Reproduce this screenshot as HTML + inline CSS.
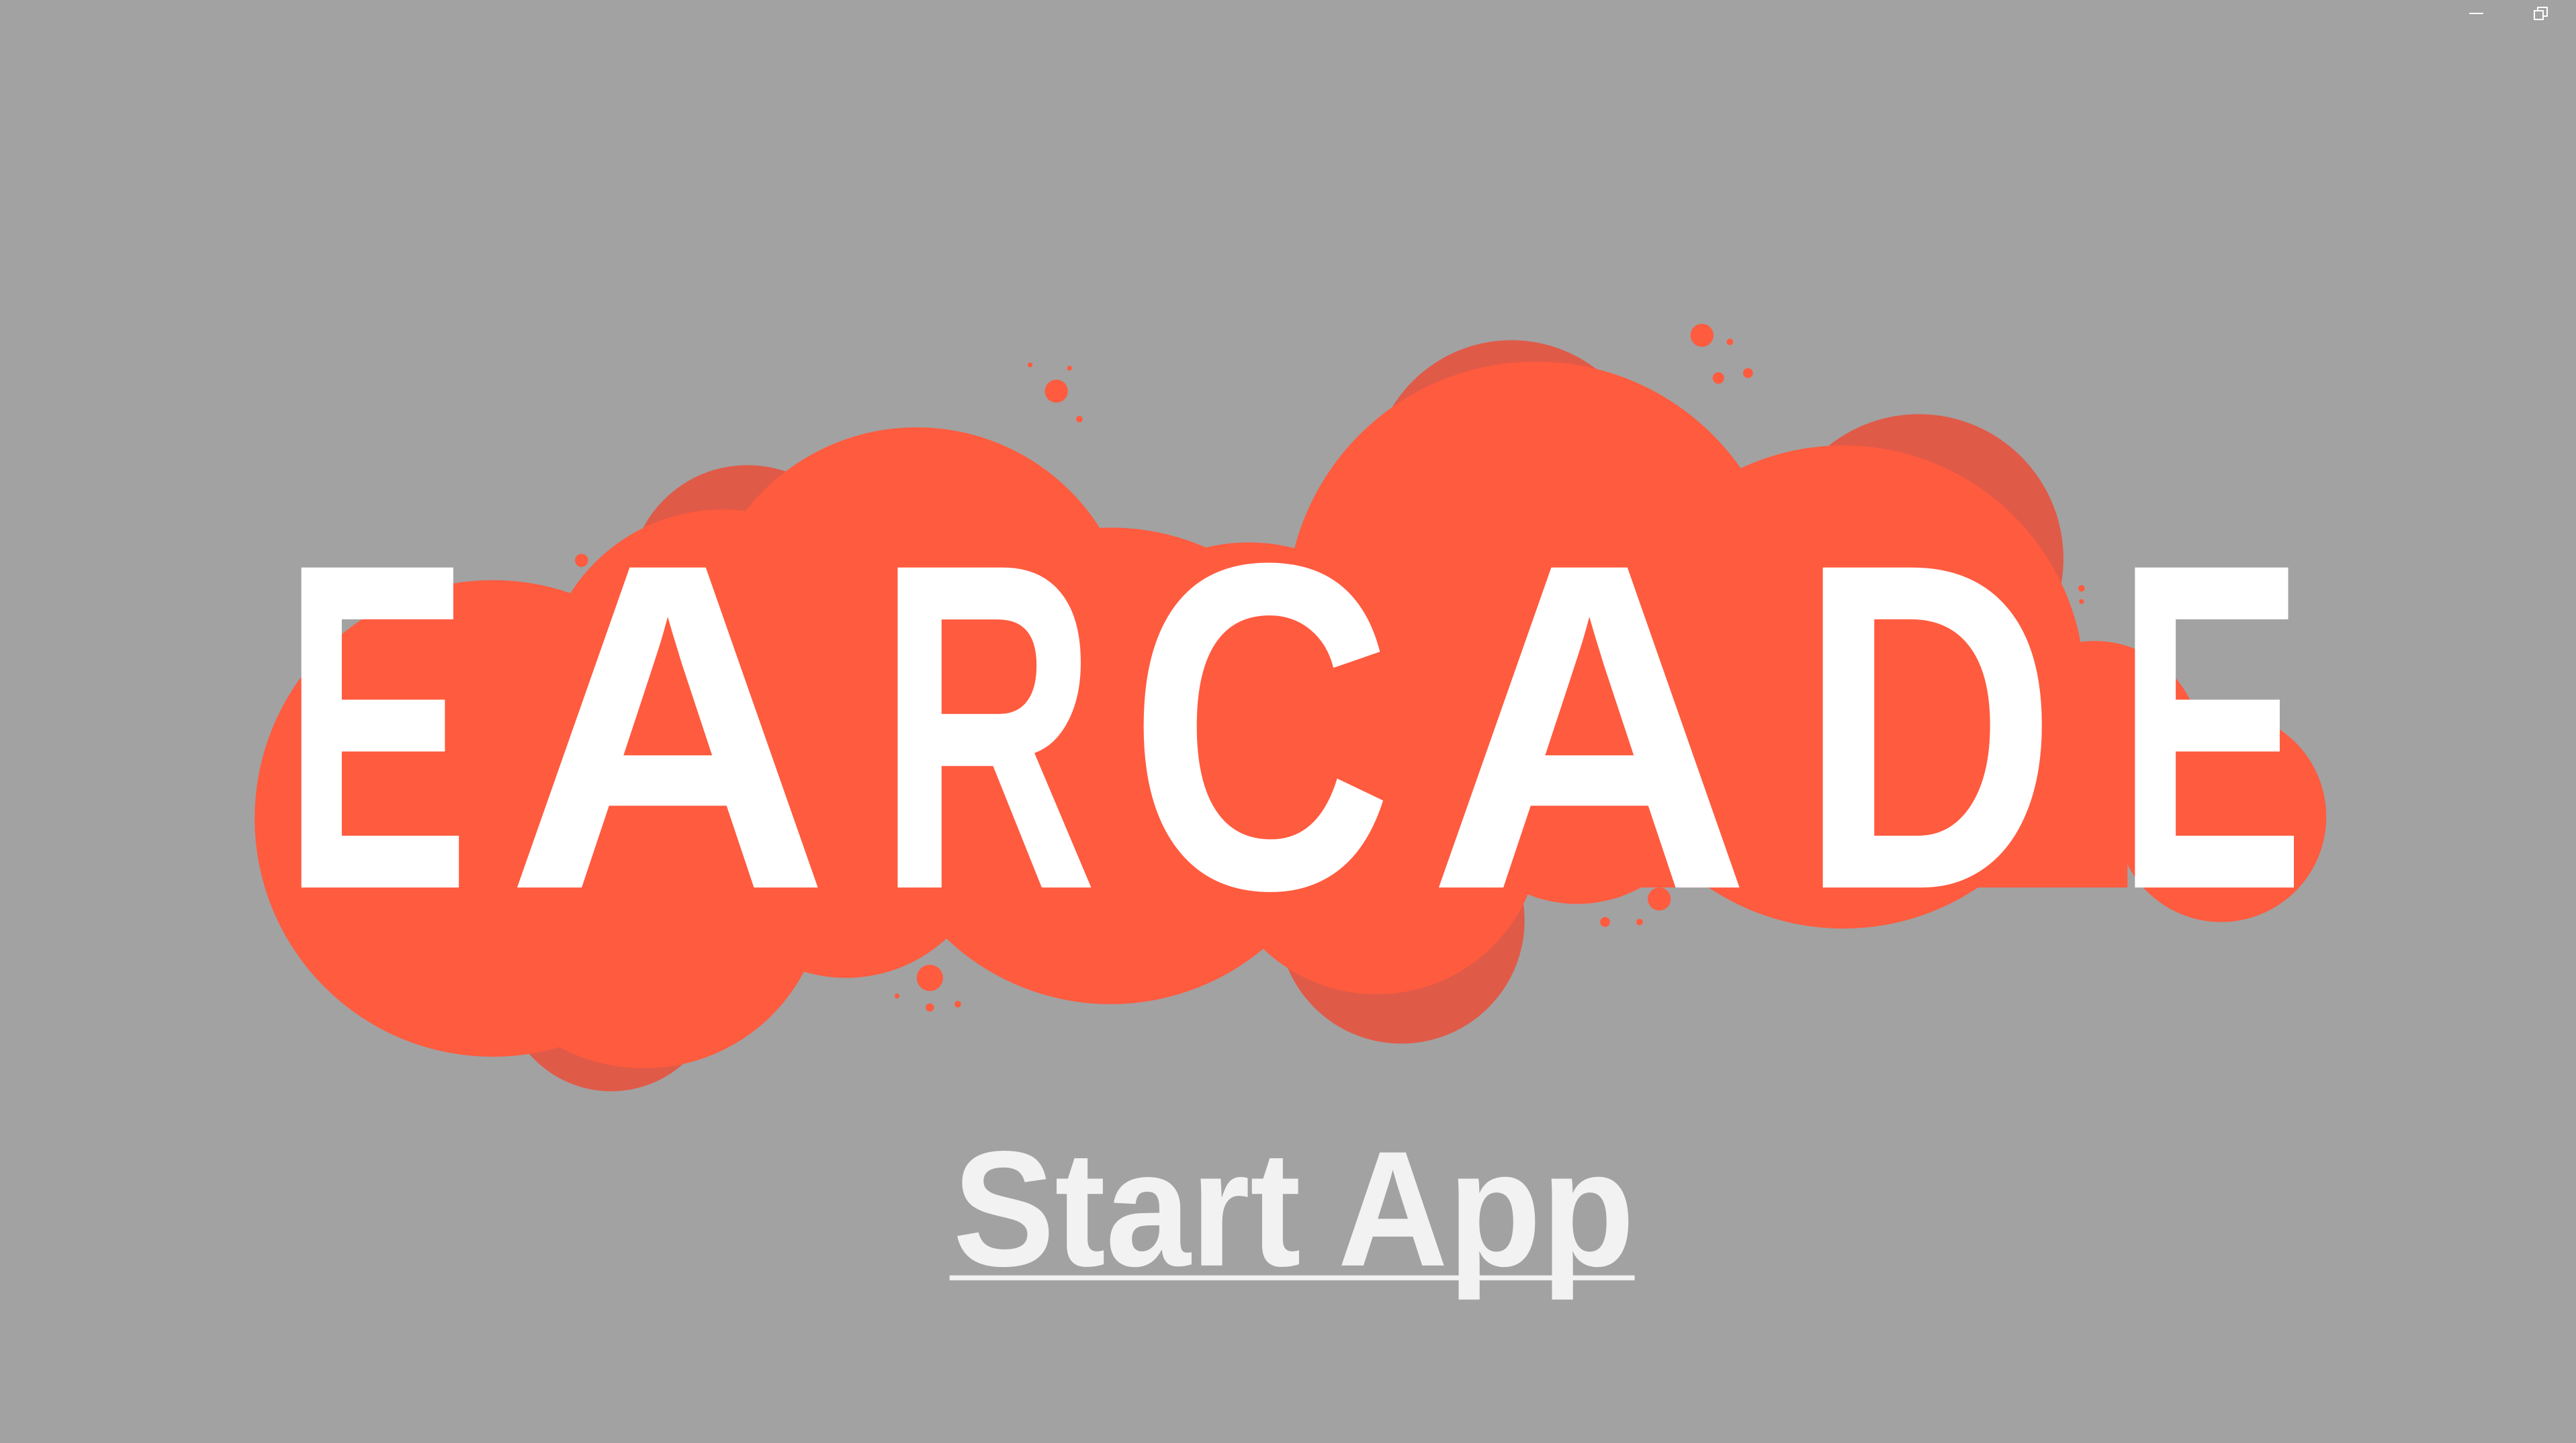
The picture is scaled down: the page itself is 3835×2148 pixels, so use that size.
<!DOCTYPE html>
<html><head><meta charset="utf-8"><style>
html,body{margin:0;padding:0;background:#a2a2a2;width:3835px;height:2148px;overflow:hidden}
svg{position:absolute;left:0;top:0}
</style></head><body>
<svg width="3835" height="2148" viewBox="0 0 1568 878" preserveAspectRatio="none">
<g fill="#e05a48">
<circle cx="455" cy="355" r="72"/><circle cx="920" cy="292" r="85"/><circle cx="1168" cy="340" r="88"/>
<circle cx="372" cy="598" r="66"/><circle cx="853" cy="560" r="75"/>
</g>
<g fill="#ff5b3f">
<circle cx="558" cy="392" r="132"/><circle cx="935" cy="372" r="152"/><circle cx="1122" cy="418" r="147"/>
<circle cx="300" cy="498" r="145"/><circle cx="392" cy="540" r="110"/><circle cx="676" cy="466" r="145"/>
<circle cx="838" cy="505" r="100"/><circle cx="1352" cy="497" r="64"/><circle cx="1275" cy="455" r="65"/>
<circle cx="440" cy="420" r="110"/><circle cx="760" cy="440" r="110"/><circle cx="515" cy="505" r="90"/>
<circle cx="960" cy="470" r="80"/>
<rect x="185" y="410" width="1110" height="130"/>
<circle cx="643" cy="238" r="7"/><circle cx="1036" cy="204" r="7"/><circle cx="1010" cy="547" r="7"/>
<circle cx="566" cy="595" r="8"/><circle cx="354" cy="341" r="4"/><circle cx="1046" cy="230" r="3.5"/>
<circle cx="1064" cy="227" r="3"/><circle cx="1053" cy="208" r="2"/><circle cx="657" cy="255" r="2"/>
<circle cx="627" cy="222" r="1.5"/><circle cx="651" cy="224" r="1.5"/><circle cx="985" cy="543" r="3"/>
<circle cx="977" cy="561" r="3"/><circle cx="998" cy="561" r="2"/><circle cx="566" cy="613" r="2.5"/>
<circle cx="583" cy="611" r="2"/><circle cx="546" cy="606" r="1.5"/><circle cx="1267" cy="358" r="2"/>
<circle cx="1267" cy="366" r="1.5"/>
</g>
<g fill="#fff" font-family="Liberation Sans, sans-serif" font-size="283" font-weight="bold">
<text x="172" y="540" textLength="114" lengthAdjust="spacingAndGlyphs">E</text>
<text x="308" y="540" textLength="197" lengthAdjust="spacingAndGlyphs">A</text>
<text x="534" y="540" textLength="134" lengthAdjust="spacingAndGlyphs">R</text>
<text x="687" y="540" textLength="161" lengthAdjust="spacingAndGlyphs">C</text>
<text x="869" y="540" textLength="197" lengthAdjust="spacingAndGlyphs">A</text>
<text x="1095" y="540" textLength="157" lengthAdjust="spacingAndGlyphs">D</text>
<text x="1288" y="540" textLength="115" lengthAdjust="spacingAndGlyphs">E</text>
</g>
<text x="580" y="770" fill="#f2f2f2" font-family="Liberation Sans, sans-serif" font-weight="bold" font-size="100" textLength="415" lengthAdjust="spacingAndGlyphs">Start App</text>
<rect x="578" y="776" width="417" height="3" fill="#f2f2f2"/>
</svg>
<div style="position:absolute;left:3676px;top:19px;width:21px;height:2px;background:#fff"></div>
<div style="position:absolute;left:3777px;top:10px;width:16px;height:15px;border:2px solid #fff;box-sizing:border-box"></div>
<div style="position:absolute;left:3772px;top:15px;width:15px;height:15px;border:2px solid #fff;box-sizing:border-box;background:#a2a2a2"></div>
</body></html>
